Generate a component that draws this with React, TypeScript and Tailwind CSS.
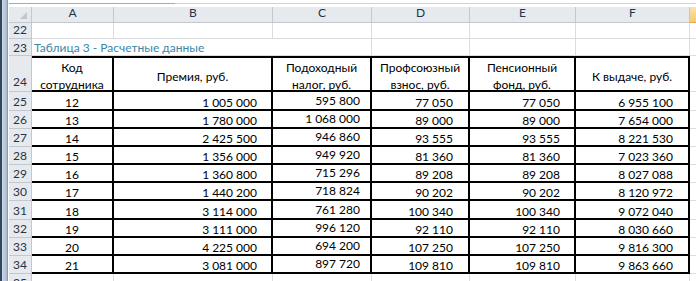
import React from 'react';

const colW = ['w-[82px]', 'w-[159px]', 'w-[99px]', 'w-[98px]', 'w-[106px]', 'w-[114px]'];
const letters = ['A', 'B', 'C', 'D', 'E', 'F'];

// per-column alignment for the numbers
const numAlign = [
  'justify-center',
  'justify-end pr-[14px]',
  'justify-end pr-[10px] pb-[2px]',
  'justify-end pr-[15px]',
  'justify-end pr-[14px]',
  'justify-end pr-[15px]',
];

const rowH = ['h-[19px]', 'h-[18px]', 'h-[18px]', 'h-[18px]', 'h-[18px]', 'h-[18px]', 'h-[19px]', 'h-[18px]', 'h-[18px]', 'h-[18px]'];

const data = [
  ['12', '1 005 000', '595 800', '77 050', '77 050', '6 955 100'],
  ['13', '1 780 000', '1 068 000', '89 000', '89 000', '7 654 000'],
  ['14', '2 425 500', '946 860', '93 555', '93 555', '8 221 530'],
  ['15', '1 356 000', '949 920', '81 360', '81 360', '7 023 360'],
  ['16', '1 360 800', '715 296', '89 208', '89 208', '8 027 088'],
  ['17', '1 440 200', '718 824', '90 202', '90 202', '8 120 972'],
  ['18', '3 114 000', '761 280', '100 340', '100 340', '9 072 040'],
  ['19', '3 111 000', '996 120', '92 110', '92 110', '8 030 660'],
  ['20', '4 225 000', '694 200', '107 250', '107 250', '9 816 300'],
  ['21', '3 081 000', '897 720', '109 810', '109 810', '9 863 660'],
];

const headers: string[][] = [
  ['Код', 'сотрудника'],
  ['Премия, руб.'],
  ['Подоходный', 'налог, руб.'],
  ['Профсоюзный', 'взнос, руб.'],
  ['Пенсионный', 'фонд, руб.'],
  ['К выдаче, руб.'],
];

const RowHead = ({ n, className = 'pb-[2px]' }: { n: number; className?: string }) => (
  <div
    className={`flex w-[23px] shrink-0 items-end justify-center border-r border-b border-[#c3c8ce] bg-[#e6e9ed] leading-[12px] text-[#26344a] ${className}`}
  >
    {n}
  </div>
);

// column G sliver on the right edge
const GCell = () => <div className="w-[6px] shrink-0 border-b border-[#dadcdf]" />;

export default function App() {
  return (
    <div className="flex h-[281px] w-[696px] overflow-hidden bg-white font-['Lato','Open_Sans',sans-serif] text-[12px] text-black">
      {/* window frame */}
      <div className="flex h-full w-[9px] shrink-0">
        <div className="w-[2px] bg-[#34475c]" />
        <div className="w-[5px] bg-gradient-to-r from-[#ccd9e8] to-[#a9bbd0]" />
        <div className="w-[1px] bg-[#8d99a6]" />
        <div className="w-[1px] bg-white" />
      </div>

      <div className="flex w-[687px] shrink-0 flex-col">
        {/* formula bar edge */}
        <div className="flex h-[7px] flex-col">
          <div className="h-[3px]" />
          <div className="flex h-[1px]">
            <div className="w-[166px] bg-[#a3aab2]" />
            <div className="flex-1 bg-[#cfd3d8]" />
          </div>
        </div>

        {/* column headers */}
        <div className="flex h-[16px]">
          <div className="relative w-[23px] shrink-0 border-r border-b border-[#c3c8ce] bg-[#e6e9ed]">
            <svg className="absolute top-[5px] left-[11px]" width="7" height="7" viewBox="0 0 7 7">
              <polygon points="7,0 7,7 0,7" fill="#c2c7cd" />
            </svg>
          </div>
          {letters.map((l, i) => (
            <div
              key={l}
              className={`${colW[i]} flex shrink-0 items-end justify-center border-r border-b border-[#c3c8ce] bg-[#e6e9ed] pb-[3px] leading-[12px] text-[#26344a]`}
            >
              {l}
            </div>
          ))}
          <div className="w-[6px] shrink-0 border-b border-[#e2a948] bg-gradient-to-b from-[#fbe3ad] to-[#f6c96f]" />
        </div>

        {/* row 22 */}
        <div className="flex h-[16px]">
          <RowHead n={22} />
          {colW.map((w, i) => (
            <div key={i} className={`${w} shrink-0 border-r border-b border-[#dadcdf]`} />
          ))}
          <GCell />
        </div>

        {/* row 23 - title */}
        <div className="flex h-[17px]">
          <RowHead n={23} className="pb-[1px]" />
          <div className={`${colW[0]} flex shrink-0 items-end border-b border-[#dadcdf] pb-[1px] pl-[2px] leading-[12px]`}>
            <span className="whitespace-nowrap text-[#3a86a8]">Таблица 3 - Расчетные данные</span>
          </div>
          <div className={`${colW[1]} shrink-0 border-b border-[#dadcdf]`} />
          {colW.slice(2).map((w, i) => (
            <div key={i} className={`${w} shrink-0 border-r border-b border-[#dadcdf]`} />
          ))}
          <GCell />
        </div>

        {/* row 24 - table header */}
        <div className="flex h-[36px]">
          <RowHead n={24} className="pb-[3px]" />
          {headers.map((h, i) => (
            <div
              key={i}
              className={`${colW[i]} flex shrink-0 flex-col items-center justify-center border-t-2 border-r-2 border-b-2 border-black pt-[4px] text-center leading-[17px]`}
            >
              {h.map((line) => (
                <span key={line} className="whitespace-nowrap">
                  {line}
                </span>
              ))}
            </div>
          ))}
          <GCell />
        </div>

        {/* rows 25-34 */}
        {data.map((row, r) => (
          <div key={r} className={`flex ${rowH[r]}`}>
            <RowHead n={25 + r} />
            {row.map((v, i) => (
              <div
                key={i}
                className={`${colW[i]} flex shrink-0 items-end border-r-2 border-b-2 border-black leading-[12px] ${numAlign[i]}`}
              >
                {v}
              </div>
            ))}
            <GCell />
          </div>
        ))}

        {/* row 35, cut off */}
        <div className="flex h-[7px]">
          <div className="flex w-[23px] shrink-0 justify-center overflow-hidden border-r border-[#c3c8ce] bg-[#e6e9ed] pt-[3px] leading-[12px] text-[#26344a]">
            35
          </div>
          {colW.map((w, i) => (
            <div key={i} className={`${w} shrink-0 border-r border-[#dadcdf]`} />
          ))}
          <div className="w-[6px] shrink-0" />
        </div>
      </div>
    </div>
  );
}
